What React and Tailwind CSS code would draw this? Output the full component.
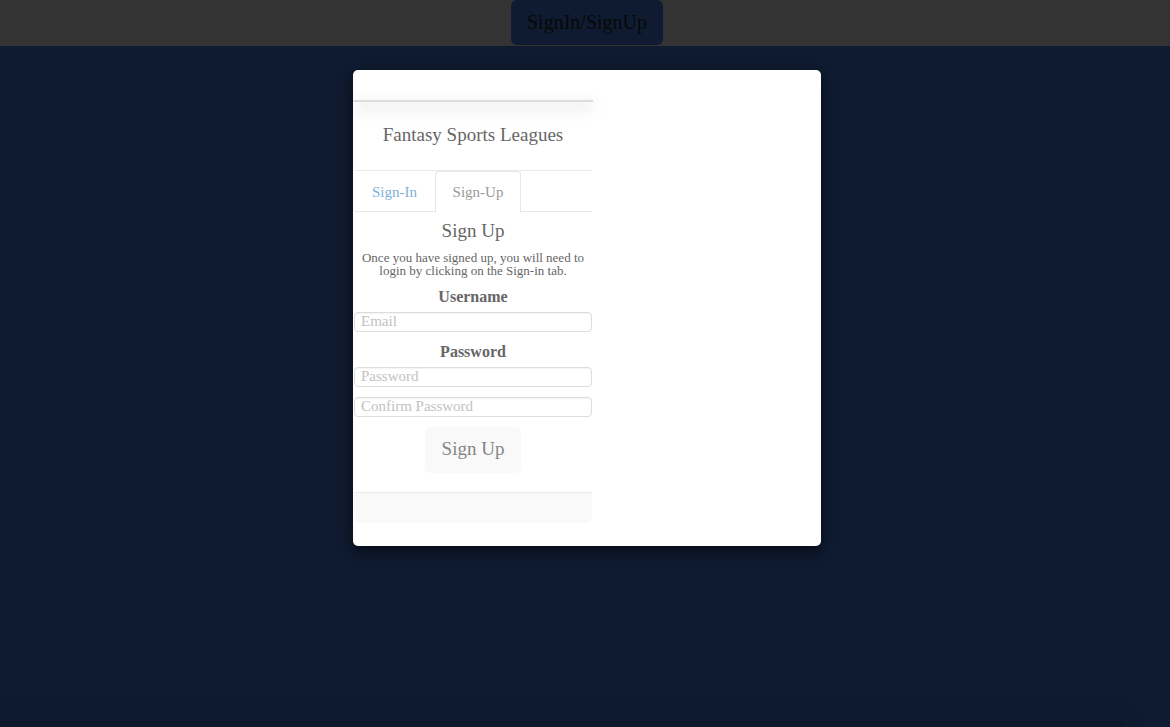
import React, { useState } from "react";

const tabBase = "h-[42px] rounded-t border text-[15px] leading-5";
const tabActive = "border-[#e6e6e6] border-b-white bg-white text-[#999999]";
const tabIdle = "border-transparent text-[#7fb0d8]";
const field =
  "block h-5 w-full rounded border border-[#dddddd] bg-white px-[6px] pb-px text-[15px] leading-4 text-[#666666] shadow-[inset_0_1px_1px_rgba(0,0,0,0.05)] placeholder:text-[#c2c2c2]";

export default function App() {
  const [tab, setTab] = useState("up");
  const signingUp = tab === "up";

  return (
    <div className="flex min-h-screen flex-col overflow-hidden bg-[#0f1b31] font-['Liberation_Serif',serif] text-[#666666]">
      <header className="flex h-[46px] items-start justify-center bg-[#333333] pl-1">
        <button
          type="button"
          className="h-[45px] rounded-md bg-[#0f1b31] px-4 pb-[2px] text-xl leading-6 text-[#080808]"
        >
          SignIn/SignUp
        </button>
      </header>

      <main className="flex flex-1 flex-col pt-6">
        <section
          role="dialog"
          aria-labelledby="dialog-title"
          className="w-[40vw] min-w-60 translate-x-0 self-center overflow-hidden rounded-[5px] bg-white pb-[23px] pt-[30px] ml-1 shadow-[0_5px_15px_rgba(0,0,0,0.6)]"
        >
          <div className="w-60">
            <div className="h-[2px] bg-[#dcdcdc] shadow-[0_5px_15px_rgba(0,0,0,0.35)]" />
            <div className="px-px">
              <h1
                id="dialog-title"
                className="h-[69px] border-b border-[#ebebeb] pt-[19px] text-center text-[19px] leading-7"
              >
                Fantasy Sports Leagues
              </h1>

              <div role="tablist" className="flex h-[41px] items-start border-b border-[#e6e6e6]">
                <button
                  type="button"
                  role="tab"
                  aria-selected={!signingUp}
                  onClick={() => setTab("in")}
                  className={`${tabBase} w-[81px] ${signingUp ? tabIdle : tabActive}`}
                >
                  Sign-In
                </button>
                <button
                  type="button"
                  role="tab"
                  aria-selected={signingUp}
                  onClick={() => setTab("up")}
                  className={`${tabBase} w-[86px] ${signingUp ? tabActive : tabIdle}`}
                >
                  Sign-Up
                </button>
              </div>

              <form className="text-center" onSubmit={(e) => e.preventDefault()}>
                <h2 className="pt-[5px] text-[19px] leading-7">{signingUp ? "Sign Up" : "Sign In"}</h2>
                {signingUp && (
                  <p className="pt-[6px] text-[13px] leading-[13px]">
                    Once you have signed up, you will need to login by clicking on the Sign-in tab.
                  </p>
                )}
                <label htmlFor="email" className="block pb-[5px] pt-[10px] text-base font-bold leading-5">
                  Username
                </label>
                <input id="email" type="email" placeholder="Email" className={field} />
                <label htmlFor="password" className="block pb-[5px] pt-[10px] text-base font-bold leading-5">
                  Password
                </label>
                <input id="password" type="password" placeholder="Password" className={field} />
                {signingUp && (
                  <input
                    type="password"
                    aria-label="Confirm Password"
                    placeholder="Confirm Password"
                    className={`${field} mt-[10px]`}
                  />
                )}
                <button
                  type="submit"
                  className="mt-[10px] h-[46px] rounded-md bg-[#f9f9f9] px-[17px] pb-[2px] text-[19px] leading-6 text-[#858585]"
                >
                  {signingUp ? "Sign Up" : "Sign In"}
                </button>
              </form>

              <footer className="mt-[19px] h-[31px] rounded-b-md border-t border-[#ebebeb] bg-[#f9f9f9]" />
            </div>
          </div>
        </section>

        <div className="mr-12 mt-auto h-2 bg-[#0d182a] shadow-[0_0_20px_#0d182a]" />
      </main>
    </div>
  );
}
